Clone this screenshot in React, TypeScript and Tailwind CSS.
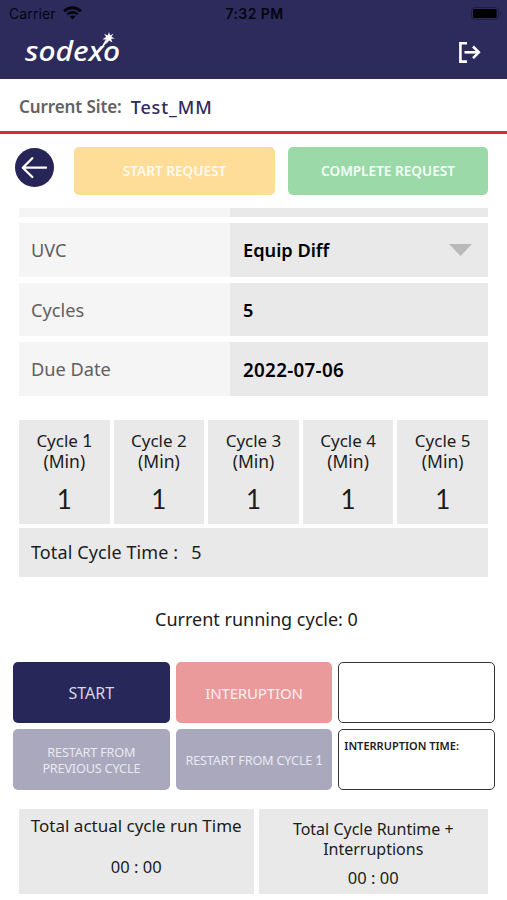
import React, { FC, ReactNode } from "react";

const details = [
  { label: "UVC", value: "Equip Diff", select: true, spacing: "" },
  { label: "Cycles", value: "5", select: false, spacing: "" },
  { label: "Due Date", value: "2022-07-06", select: false, spacing: "tracking-[0.3px] text-[18.8px]" },
];

const cycles = [1, 1, 1, 1, 1];

const StatusBar: FC = () => (
  <div className="flex h-[28px] items-center justify-between pl-[9px] pr-[4px] font-['Inter',sans-serif] text-[#050410]">
    <div className="flex w-[160px] items-center gap-[7px]">
      <span className="text-[14px] leading-none tracking-[0.1px]">Carrier</span>
      <svg className="-mt-[2px]" width="19" height="14" viewBox="0 0 19 14" fill="none" stroke="currentColor">
        <path d="M1.2 5.2C5.9 0.6 13.1 0.6 17.8 5.2" strokeWidth="2.9" />
        <path d="M4.3 8.3C7.3 5.5 11.7 5.5 14.7 8.3" strokeWidth="2.5" />
        <path d="M6.6 10.6C8.2 9.1 10.8 9.1 12.4 10.6L9.5 13.5Z" fill="currentColor" stroke="none" />
      </svg>
    </div>
    <span className="-ml-[3px] text-[14px] font-semibold leading-none tracking-[0.4px]">7:32 PM</span>
    <div className="flex w-[160px] justify-end">
      <svg className="-mt-[2px]" width="32" height="13" viewBox="0 0 32 13">
        <rect x="0.5" y="0.5" width="27" height="12" rx="3.5" fill="none" stroke="#1f1c47" />
        <rect x="2" y="2" width="23.6" height="9" rx="1.5" fill="#000" />
        <path d="M29 4.3C30.6 5 30.6 7.8 29 8.4Z" fill="#1f1c47" />
      </svg>
    </div>
  </div>
);

const Logo: FC = () => (
  <svg className="overflow-visible" width="100" height="36" viewBox="0 0 100 36" fill="#fff">
    <text
      x="1"
      y="33"
      textLength="95"
      lengthAdjust="spacingAndGlyphs"
      className="font-['Noto_Sans',sans-serif] text-[26.5px] font-medium italic"
    >
      sodexo
    </text>
    <path d="M74 25L81.5 12L84 13Z" />
    <path d="M85.1 4L86 7.5L89.5 5.7L87.3 8.9L90.9 10.2L87.1 11.1L88.4 14.6L85.1 12.4L82.3 16L82.6 11.7L78.5 11.3L82.1 9.1L80.1 5.8L83.7 7.4Z" />
  </svg>
);

const Button: FC<{ className: string; children: ReactNode }> = ({ className, children }) => (
  <button className={`flex items-center justify-center rounded-[5px] text-center ${className}`}>
    {children}
  </button>
);

const App: FC = () => {
  return (
    <div className="h-[900px] w-[507px] overflow-hidden bg-white font-['Noto_Sans',sans-serif] text-[#1c1c1c]">
      <header className="h-[79px] bg-[#2d2b5c]">
        <StatusBar />
        <div className="flex items-start justify-between pl-[24px] pr-[26px]">
          <Logo />
          <svg className="mt-[13px]" width="23" height="23" viewBox="0 0 23 23" fill="none" stroke="#fff" strokeWidth="2.6">
            <path d="M9 2.2H2.4V20.6H9" />
            <path d="M6.5 11.3H21" />
            <path d="M15 5.5L20.8 11.3L15 17.1" />
          </svg>
        </div>
      </header>

      <div className="flex h-[55px] items-center gap-[9px] border-b-[3px] border-[#d02f32] pl-[19px] pt-[4px] text-[17px] font-semibold">
        <span className="tracking-[-0.1px] text-[#626262]">Current Site:</span>
        <span className="text-[18px] font-medium tracking-[0.9px] text-[#2d2b5c]">Test_MM</span>
      </div>

      <div className="flex h-[74px] pl-[15px] pt-[13px]">
        <button className="mt-px h-[39px] w-[39px]">
          <svg width="39" height="39" viewBox="0 0 39 39" fill="none" stroke="#fff" strokeWidth="2.3" strokeLinecap="round" strokeLinejoin="round">
            <circle cx="19.5" cy="19.5" r="19.5" fill="#272558" stroke="none" />
            <path d="M31 19.7H8M17.3 10.3L7.8 19.7L17.3 29" />
          </svg>
        </button>
        <Button className="ml-[20px] h-[48px] w-[201px] bg-[#fedd98] text-[13.6px] font-semibold text-[#fffaf0]">
          START REQUEST
        </Button>
        <Button className="ml-[13px] h-[48px] w-[200px] bg-[#9bd9a9] text-[13.6px] font-semibold text-[#f5fff7]">
          COMPLETE REQUEST
        </Button>
      </div>

      <main>
        <section className="flex flex-col gap-[6px] px-[19px]">
          <div className="flex h-[9px]">
            <div className="w-[211px] bg-[#f5f5f5]" />
            <div className="flex-1 bg-[#e9e9e9]" />
          </div>
          {details.map((row) => (
            <div key={row.label} className="flex h-[53.6px]">
              <div className="flex w-[211px] items-center bg-[#f5f5f5] pl-[12px] pt-[2px] text-[18.2px] text-[#606060]">
                {row.label}
              </div>
              <div className="flex flex-1 items-center justify-between bg-[#e9e9e9] pl-[13px] pr-[16px] text-[18.2px] font-semibold text-black">
                <span className={`pt-[2px] ${row.spacing}`}>{row.value}</span>
                {row.select && (
                  <svg width="23" height="12" viewBox="0 0 23 12">
                    <path d="M0 0H23L11.5 12Z" fill="#b9b9b9" />
                  </svg>
                )}
              </div>
            </div>
          ))}
        </section>

        <section className="mt-[24px] px-[19px]">
          <div className="grid grid-cols-5 gap-[4px]">
            {cycles.map((minutes, i) => (
              <div key={i} className="flex h-[104px] flex-col items-center bg-[#e9e9e9] pt-[11px]">
                <div className="text-center text-[17px] leading-[20px]">
                  Cycle <span className={i === 0 ? "font-['Lato',sans-serif]" : ""}>{i + 1}</span>
                  <br />
                  <span className="text-[17.5px]">(Min)</span>
                </div>
                <div className="mt-[10px] font-['Lato',sans-serif] text-[26px] leading-[34px]">{minutes}</div>
              </div>
            ))}
          </div>
          <div className="mt-[4px] flex h-[49px] items-center bg-[#e9e9e9] pl-[12px] text-[18px] tracking-[0.1px]">
            <span>Total Cycle Time :</span>
            <span className="ml-[13px]">5</span>
          </div>
        </section>

        <div className="flex h-[85px] items-center justify-center pl-[6px] text-[18px]">
          Current running cycle: 0
        </div>

        <section className="grid grid-cols-3 gap-[6px] pl-[13px] pr-[12px]">
          <Button className="h-[61px] bg-[#282759] pt-[2px] text-[16px] text-[#d8d7e6]">START</Button>
          <Button className="h-[61px] bg-[#eb9a9b] pt-[2px] text-[15px] tracking-[-0.15px] text-[#fff0f0]">INTERUPTION</Button>
          <div className="h-[61px] rounded-[5px] border-[1.5px] border-[#333]" />
          <Button className="h-[61px] bg-[#a9a8bd] pt-[2px] text-[12.7px] leading-[16px] tracking-[-0.2px] text-[#e9e9f3]">
            RESTART FROM
            <br />
            PREVIOUS CYCLE
          </Button>
          <Button className="h-[61px] bg-[#a9a8bd] pt-[2px] text-[12.7px] tracking-[-0.2px] text-[#e9e9f3]">
            <span>
              RESTART FROM CYCLE <span className="font-['Lato',sans-serif]">1</span>
            </span>
          </Button>
          <div className="h-[61px] rounded-[5px] border border-[#333] pl-[5px] pt-[8px] text-[11px] font-semibold leading-[16px]">
            INTERRUPTION TIME:
          </div>
        </section>

        <section className="mt-[19px] flex gap-[5px] px-[19px] text-center text-[17px] leading-[20px]">
          <div className="h-[85px] w-[235px] bg-[#e9e9e9] pt-[7px]">
            <p>Total actual cycle run Time</p>
            <p className="mt-[21px] text-[16.5px]">00 : 00</p>
          </div>
          <div className="h-[85px] w-[230px] bg-[#e9e9e9] pt-[10px] text-[16px]">
            <p>
              Total Cycle Runtime +
              <br />
              Interruptions
            </p>
            <p className="mt-[9px] text-[16.5px]">00 : 00</p>
          </div>
        </section>
      </main>
    </div>
  );
};

export default App;
